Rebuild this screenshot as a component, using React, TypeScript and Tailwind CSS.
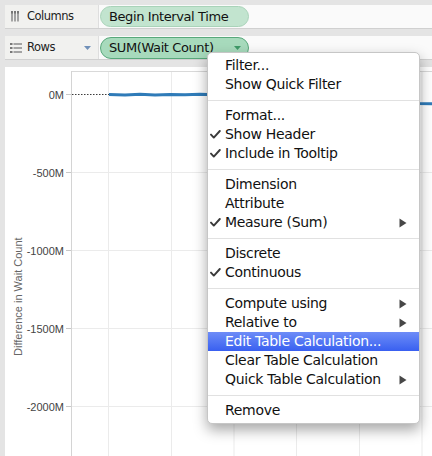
import React from "react";

type Item = { label: string; check?: boolean; arrow?: boolean; hl?: boolean };

const groups: Item[][] = [
  [{ label: "Filter..." }, { label: "Show Quick Filter" }],
  [
    { label: "Format..." },
    { label: "Show Header", check: true },
    { label: "Include in Tooltip", check: true },
  ],
  [
    { label: "Dimension" },
    { label: "Attribute" },
    { label: "Measure (Sum)", check: true, arrow: true },
  ],
  [{ label: "Discrete" }, { label: "Continuous", check: true }],
  [
    { label: "Compute using", arrow: true },
    { label: "Relative to", arrow: true },
    { label: "Edit Table Calculation...", hl: true },
    { label: "Clear Table Calculation" },
    { label: "Quick Table Calculation", arrow: true },
  ],
  [{ label: "Remove" }],
];

function Check() {
  return (
    <svg width="11" height="9" viewBox="0 0 11 9" className="block">
      <path d="M1 4.6 L3.8 7.6 L9.8 1" fill="none" stroke="#3a3a3a" strokeWidth="1.9" strokeLinecap="round" strokeLinejoin="round" />
    </svg>
  );
}

function Arrow({ color }: { color: string }) {
  return (
    <svg width="8" height="10" viewBox="0 0 8 10" className="block">
      <path d="M0.5 0.5 L7.5 5 L0.5 9.5 Z" fill={color} />
    </svg>
  );
}

function MenuRow({ it }: { it: Item }) {
  return (
    <div
      className={
        it.hl
          ? "relative flex h-[19px] items-center bg-linear-to-b from-[#6e8cf7] to-[#395ff0] pl-[17px] text-white"
          : "relative flex h-[19px] items-center pl-[17px] text-[#111]"
      }
    >
      {it.check && (
        <span className="absolute left-[2px] top-[5px]">
          <Check />
        </span>
      )}
      <span className="whitespace-nowrap text-[14px] leading-[19px] tracking-[-0.3px]">{it.label}</span>
      {it.arrow && (
        <span className="absolute left-[191px] top-[5px]">
          <Arrow color={it.hl ? "#fff" : "#474747"} />
        </span>
      )}
    </div>
  );
}

function ColumnsIcon() {
  return (
    <svg width="8" height="11" viewBox="0 0 8 11" className="block">
      <rect x="0" y="0" width="2" height="10.5" fill="#a3a3a3" />
      <rect x="3" y="0" width="2" height="10.5" fill="#a3a3a3" />
      <rect x="6" y="0" width="2" height="10.5" fill="#a3a3a3" />
      <rect x="0" y="0" width="2" height="2.5" fill="#777" />
      <rect x="3" y="0" width="2" height="2.5" fill="#777" />
      <rect x="6" y="0" width="2" height="2.5" fill="#777" />
    </svg>
  );
}

function RowsIcon() {
  return (
    <svg width="12" height="10" viewBox="0 0 12 10" className="block">
      {[0, 4, 8].map((y) => (
        <g key={y}>
          <rect x="0" y={y} width="2.5" height="2" fill="#777" />
          <rect x="3.5" y={y} width="8.5" height="2" fill="#a3a3a3" />
        </g>
      ))}
    </svg>
  );
}

function Chart() {
  const hy = [27.5, 105.5, 183.5, 261.5, 339.5];
  const labels = ["0M", "-500M", "-1000M", "-1500M", "-2000M"];
  const vx = [103.5, 166.5, 229, 291.5, 354.5, 417];
  const pts: string = [
    [104, 27.6], [120, 27.9], [135, 27.3], [150, 28.0], [165, 27.5], [180, 27.8], [195, 27.2],
    [210, 27.7], [230, 27.4], [250, 27.9], [270, 27.5], [290, 27.8], [310, 27.4], [330, 27.7],
    [350, 27.5], [370, 27.9], [390, 27.6], [402, 28], [413, 36.6], [427, 36.8],
  ]
    .map((p) => p.join(","))
    .join(" ");
  return (
    <svg width="427" height="389" viewBox="0 0 427 389" className="block">
      {vx.map((x) => (
        <line key={x} x1={x} y1={4} x2={x} y2={389} stroke="#ebebeb" strokeWidth="1" />
      ))}
      {hy.slice(1).map((y) => (
        <line key={y} x1={66} y1={y} x2={427} y2={y} stroke="#ebebeb" strokeWidth="1" />
      ))}
      <line x1={66} y1={4.5} x2={427} y2={4.5} stroke="#d9d9d9" strokeWidth="1" />
      <line x1={66.5} y1={4} x2={66.5} y2={389} stroke="#d4d4d4" strokeWidth="1" />
      {hy.map((y) => (
        <line key={"t" + y} x1={61} y1={y} x2={66} y2={y} stroke="#c8c8c8" strokeWidth="1" />
      ))}
      <line x1={67} y1={27.5} x2={104} y2={27.5} stroke="#3c3c3c" strokeWidth="1" strokeDasharray="1.5 1.5" />
      <polyline points={pts} fill="none" stroke="#2f7bb8" strokeWidth="3" strokeLinejoin="round" />
      {hy.map((y, i) => (
        <text
          key={"l" + y}
          x={59}
          y={y + 4}
          textAnchor="end"
          fontFamily="'Liberation Sans', Arial, sans-serif"
          fontSize="11"
          fill="#444"
        >
          {labels[i]}
        </text>
      ))}
      <text
        x={0}
        y={0}
        transform="translate(17 229.7) rotate(-90)"
        textAnchor="middle"
        fontFamily="'Liberation Sans', Arial, sans-serif"
        fontSize="11"
        fill="#666"
      >
        Difference in Wait Count
      </text>
    </svg>
  );
}

export default function App() {
  return (
    <div className="relative h-[456px] w-[432px] overflow-hidden bg-[#e4e4e4] font-['DejaVu_Sans',sans-serif] text-black">
      <div className="flex flex-col gap-[7px] pl-[5px] pt-[5px]">
        {/* Columns shelf */}
        <div className="flex h-[24px] border-b border-[#d0d0d0]">
          <div className="flex w-[93px] items-center bg-[#f1f1ef] pl-[6px]">
            <div className="w-[16px]">
              <ColumnsIcon />
            </div>
            <span className="text-[11.5px] tracking-[-0.5px] text-[#222]">Columns</span>
          </div>
          <div className="flex flex-1 items-center border-l border-[#dedede] bg-[#fafafa] pl-[1px]">
            <div className="flex h-[21px] w-[149px] items-center rounded-full border border-[#a9d3b9] bg-[#c2e4cf] pl-[8px]">
              <span className="whitespace-nowrap text-[13px] tracking-[-0.4px] text-[#111]">Begin Interval Time</span>
            </div>
          </div>
        </div>
        {/* Rows shelf */}
        <div className="flex h-[24px] border-b border-[#d0d0d0]">
          <div className="flex w-[93px] items-center bg-[#f1f1ef] pl-[5px]">
            <div className="w-[17px]">
              <RowsIcon />
            </div>
            <span className="text-[11.5px] tracking-[-0.5px] text-[#222]">Rows</span>
            <svg width="7" height="4" viewBox="0 0 7 4" className="ml-auto mr-[7px] block">
              <path d="M0 0 L7 0 L3.5 4 Z" fill="#7090b8" />
            </svg>
          </div>
          <div className="flex flex-1 items-center border-l border-[#dedede] bg-[#fafafa] pl-[1px]">
            <div className="flex h-[22px] w-[149px] items-center rounded-full border border-[#58a87b] bg-[#a7dabc] pl-[8px]">
              <span className="whitespace-nowrap text-[13px] tracking-[-0.4px] text-[#111]">SUM(Wait Count)</span>
              <svg width="7" height="4" viewBox="0 0 7 4" className="ml-auto mr-[7px] block">
                <path d="M0 0 L7 0 L3.5 4 Z" fill="#3f9a68" />
              </svg>
            </div>
          </div>
        </div>
      </div>
      <div className="ml-[5px] mt-[7px] h-[389px] bg-white">
        <Chart />
      </div>

      {/* Context menu */}
      <div className="absolute left-[207px] top-[52px] w-[213px] rounded-[5px] border border-[#c6c6c6] bg-white py-[3px] shadow-[0_6px_14px_rgba(0,0,0,0.35)]">
        {groups.map((g, gi) => (
          <div key={gi}>
            {gi > 0 && (
              <div className="flex h-[12px] items-center">
                <div className="h-px w-full bg-[#e1e1e1]" />
              </div>
            )}
            {g.map((it) => (
              <MenuRow key={it.label} it={it} />
            ))}
          </div>
        ))}
      </div>
    </div>
  );
}
